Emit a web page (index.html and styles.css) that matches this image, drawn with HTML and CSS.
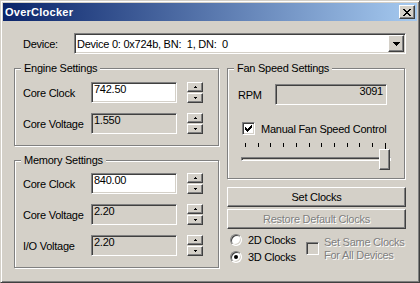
FILE: index.html
```html
<!DOCTYPE html>
<html lang="en">
<head>
    <meta charset="UTF-8">
    <title>OverClocker</title>
    <link rel="stylesheet" href="styles.css">
</head>
<body>
<div class="window">
    <div class="titlebar">
        <span class="title">OverClocker</span>
        <span class="close raised">
            <svg width="8" height="7" viewBox="0 0 8 7"><path d="M0 0h2v1H0zM6 0h2v1H6zM1 1h2v1H1zM5 1h2v1H5zM2 2h4v1H2zM3 3h2v1H3zM2 4h4v1H2zM1 5h2v1H1zM5 5h2v1H5zM0 6h2v1H0zM6 6h2v1H6z"/></svg>
        </span>
    </div>

    <div class="client">
        <div class="device-row">
            <span class="device-label">Device:</span>
            <div class="combo sunken">
                <span class="combo-text">Device 0: 0x724b, BN:  1, DN:  0</span>
                <span class="combo-btn raised">
                    <svg width="7" height="4" viewBox="0 0 7 4"><path d="M0 0h7v1H6v1H5v1H4v1H3V3H2V2H1V1H0z"/></svg>
                </span>
            </div>
        </div>

        <div class="columns">
            <div class="left">
                <div class="group engine">
                    <span class="legend">Engine Settings</span>
                    <div class="field-row">
                        <span class="field-label">Core Clock</span>
                        <div class="edit sunken">742.50</div>
                        <div class="spin">
                            <span class="spin-btn raised"><svg width="3" height="2" viewBox="0 0 3 2"><path d="M1 0h1v1h1v1H0V1h1z"/></svg></span>
                            <span class="spin-btn raised"><svg width="3" height="2" viewBox="0 0 3 2"><path d="M0 0h3v1H2v1H1V1H0z"/></svg></span>
                        </div>
                    </div>
                    <div class="field-row">
                        <span class="field-label">Core Voltage</span>
                        <div class="edit sunken readonly">1.550</div>
                        <div class="spin">
                            <span class="spin-btn raised"><svg width="3" height="2" viewBox="0 0 3 2"><path d="M1 0h1v1h1v1H0V1h1z"/></svg></span>
                            <span class="spin-btn raised"><svg width="3" height="2" viewBox="0 0 3 2"><path d="M0 0h3v1H2v1H1V1H0z"/></svg></span>
                        </div>
                    </div>
                </div>

                <div class="group memory">
                    <span class="legend">Memory Settings</span>
                    <div class="field-row">
                        <span class="field-label">Core Clock</span>
                        <div class="edit sunken">840.00</div>
                        <div class="spin">
                            <span class="spin-btn raised"><svg width="3" height="2" viewBox="0 0 3 2"><path d="M1 0h1v1h1v1H0V1h1z"/></svg></span>
                            <span class="spin-btn raised"><svg width="3" height="2" viewBox="0 0 3 2"><path d="M0 0h3v1H2v1H1V1H0z"/></svg></span>
                        </div>
                    </div>
                    <div class="field-row">
                        <span class="field-label">Core Voltage</span>
                        <div class="edit sunken readonly">2.20</div>
                        <div class="spin">
                            <span class="spin-btn raised"><svg width="3" height="2" viewBox="0 0 3 2"><path d="M1 0h1v1h1v1H0V1h1z"/></svg></span>
                            <span class="spin-btn raised"><svg width="3" height="2" viewBox="0 0 3 2"><path d="M0 0h3v1H2v1H1V1H0z"/></svg></span>
                        </div>
                    </div>
                    <div class="field-row">
                        <span class="field-label">I/O Voltage</span>
                        <div class="edit sunken readonly">2.20</div>
                        <div class="spin">
                            <span class="spin-btn raised"><svg width="3" height="2" viewBox="0 0 3 2"><path d="M1 0h1v1h1v1H0V1h1z"/></svg></span>
                            <span class="spin-btn raised"><svg width="3" height="2" viewBox="0 0 3 2"><path d="M0 0h3v1H2v1H1V1H0z"/></svg></span>
                        </div>
                    </div>
                </div>
            </div>

            <div class="right">
                <div class="group fan">
                    <span class="legend">Fan Speed Settings</span>
                    <div class="rpm-row">
                        <span class="rpm-label">RPM</span>
                        <div class="edit sunken readonly rpm">3091</div>
                    </div>
                    <div class="check-row">
                        <span class="checkbox sunken">
                            <svg width="7" height="7" viewBox="0 0 7 7"><path d="M6 0h1v1H6zM5 1h2v1H5zM0 2h1v1H0zM4 2h3v1H4zM0 3h2v1H0zM3 3h3v1H3zM0 4h5v1H0zM1 5h3v1H1zM2 6h1v1H2z"/></svg>
                        </span>
                        <span>Manual Fan Speed Control</span>
                    </div>
                    <div class="slider">
                        <div class="ticks">
                            <span></span><span></span><span></span><span></span><span></span><span></span>
                            <span></span><span></span><span></span><span></span><span></span><span class="last"></span>
                        </div>
                        <div class="track"></div>
                        <div class="thumb raised"></div>
                    </div>
                </div>

                <button class="btn raised">Set Clocks</button>
                <button class="btn raised disabled">Restore Default Clocks</button>

                <div class="options">
                    <div class="radios">
                        <div class="radio-row"><span class="radio"></span>2D Clocks</div>
                        <div class="radio-row"><span class="radio checked"></span>3D Clocks</div>
                    </div>
                    <div class="same">
                        <span class="checkbox sunken off"></span>
                        <span class="same-text">Set Same Clocks<br>For All Devices</span>
                    </div>
                </div>
            </div>
        </div>
    </div>
</div>
</body>
</html>
```

FILE: styles.css
```css
body {
    margin: 0;
    background: #d4d0c8;
    font-family: "Liberation Sans", Arial, sans-serif;
    font-size: 11px;
    letter-spacing: -0.25px;
    color: #000;
}

/* classic 3D borders */
.raised {
    box-sizing: border-box;
    background: #d4d0c8;
    border: 1px solid;
    border-color: #fff #404040 #404040 #fff;
    box-shadow: inset -1px -1px #808080, inset 1px 1px #d4d0c8;
}

.sunken {
    box-sizing: border-box;
    border: 1px solid;
    border-color: #808080 #fff #fff #808080;
    box-shadow: inset 1px 1px #404040, inset -1px -1px #d4d0c8;
}

.window {
    width: 420px;
    height: 283px;
    box-sizing: border-box;
    padding: 2px;
    background: #d4d0c8;
    border: 1px solid;
    border-color: #d4d0c8 #404040 #404040 #d4d0c8;
    box-shadow: inset 1px 1px #fff, inset -1px -1px #808080;
}

.titlebar {
    height: 18px;
    padding: 0 2px;
    display: flex;
    align-items: center;
    justify-content: space-between;
    background: linear-gradient(to right, #0a246a, #a6caf0);
}

.title {
    color: #fff;
    font-weight: bold;
    letter-spacing: 0.25px;
}

.close {
    width: 16px;
    height: 14px;
    display: flex;
    align-items: center;
    justify-content: center;
}

.client {
    padding: 12px 0 0 11px;
}

.device-row {
    display: flex;
    align-items: center;
    height: 21px;
}

.device-label {
    width: 60px;
    padding-left: 9px;
    box-sizing: border-box;
}

.combo {
    width: 332px;
    height: 21px;
    padding: 1px;
    background: #fff;
    display: flex;
    align-items: center;
    justify-content: space-between;
}

.combo-text {
    padding-left: 1px;
    white-space: pre;
}

.combo-btn {
    width: 16px;
    height: 17px;
    display: flex;
    align-items: center;
    justify-content: center;
}

.columns {
    display: grid;
    grid-template-columns: 205px 178px;
    column-gap: 8px;
    align-items: start;
    margin-top: 14px;
}

.group {
    position: relative;
    box-sizing: border-box;
    border: 1px solid #808080;
    box-shadow: inset 1px 1px #fff, 1px 1px #fff;
}

.legend {
    position: absolute;
    top: -7px;
    left: 6px;
    padding: 0 3px 0 3px;
    line-height: 13px;
    background: #d4d0c8;
}

.engine {
    height: 78px;
    padding: 13px 0 0 8px;
    display: flex;
    flex-direction: column;
    gap: 10px;
}

.memory {
    height: 108px;
    margin-top: 14px;
    padding: 12px 0 0 8px;
    display: flex;
    flex-direction: column;
    gap: 10px;
}

.field-row {
    display: flex;
    align-items: center;
    height: 21px;
}

.field-label {
    width: 68px;
}

.edit {
    width: 86px;
    height: 21px;
    padding: 0 2px;
    line-height: 13px;
    background: #fff;
}

.readonly {
    background: #d4d0c8;
}

.spin {
    margin-left: 10px;
    display: flex;
    flex-direction: column;
    gap: 1px;
}

.spin-btn {
    width: 16px;
    height: 10px;
    display: flex;
    align-items: center;
    justify-content: center;
}

.fan {
    height: 111px;
    padding: 15px 0 0 10px;
}

.rpm-row {
    display: flex;
    align-items: center;
}

.rpm-label {
    width: 37px;
}

.rpm {
    width: 112px;
    padding-right: 3px;
    text-align: right;
}

.check-row {
    display: flex;
    align-items: center;
    margin: 17px 0 0 4px;
}

.checkbox {
    width: 13px;
    height: 13px;
    margin-right: 6px;
    background: #fff;
    display: flex;
    align-items: center;
    justify-content: center;
}

.checkbox.off {
    background: #d4d0c8;
    margin-right: 5px;
}

.slider {
    position: relative;
    width: 150px;
    margin: 8px 0 0 3px;
}

.ticks {
    height: 6px;
    padding: 0 5px 0 4px;
    display: flex;
    justify-content: space-between;
    align-items: flex-start;
}

.ticks span {
    width: 1px;
    height: 4px;
    background: #000;
}

.ticks .last {
    height: 6px;
}

.track {
    height: 4px;
    margin-top: 8px;
    box-sizing: border-box;
    border: 1px solid;
    border-color: #808080 #fff #fff #808080;
    box-shadow: inset 1px 1px #404040, inset -1px -1px #d4d0c8;
}

.thumb {
    position: absolute;
    top: 6px;
    left: 138px;
    width: 11px;
    height: 21px;
}

.btn {
    display: block;
    width: 179px;
    height: 20px;
    margin-top: 8px;
    padding: 0;
    font: inherit;
    letter-spacing: inherit;
    color: #000;
}

.btn.disabled {
    margin-top: 2px;
}

.disabled,
.same-text {
    color: #808080;
    text-shadow: 1px 1px #fff;
}

.options {
    margin-top: 5px;
    display: flex;
    align-items: center;
}

.radios {
    width: 79px;
    padding-left: 3px;
    box-sizing: border-box;
    display: flex;
    flex-direction: column;
    gap: 5px;
}

.radio-row {
    display: flex;
    align-items: center;
    height: 12px;
}

.radio {
    width: 12px;
    height: 12px;
    margin-right: 6px;
    box-sizing: border-box;
    border-radius: 50%;
    background: #fff;
    border: 1px solid;
    border-color: #808080 #fff #fff #808080;
    box-shadow: inset 1px 1px #404040, inset -1px -1px #d4d0c8;
    display: flex;
    align-items: center;
    justify-content: center;
}

.radio.checked::after {
    content: '';
    width: 4px;
    height: 4px;
    border-radius: 50%;
    background: #000;
}

.same {
    display: flex;
    align-items: center;
}

.same-text {
    line-height: 13px;
}
```
